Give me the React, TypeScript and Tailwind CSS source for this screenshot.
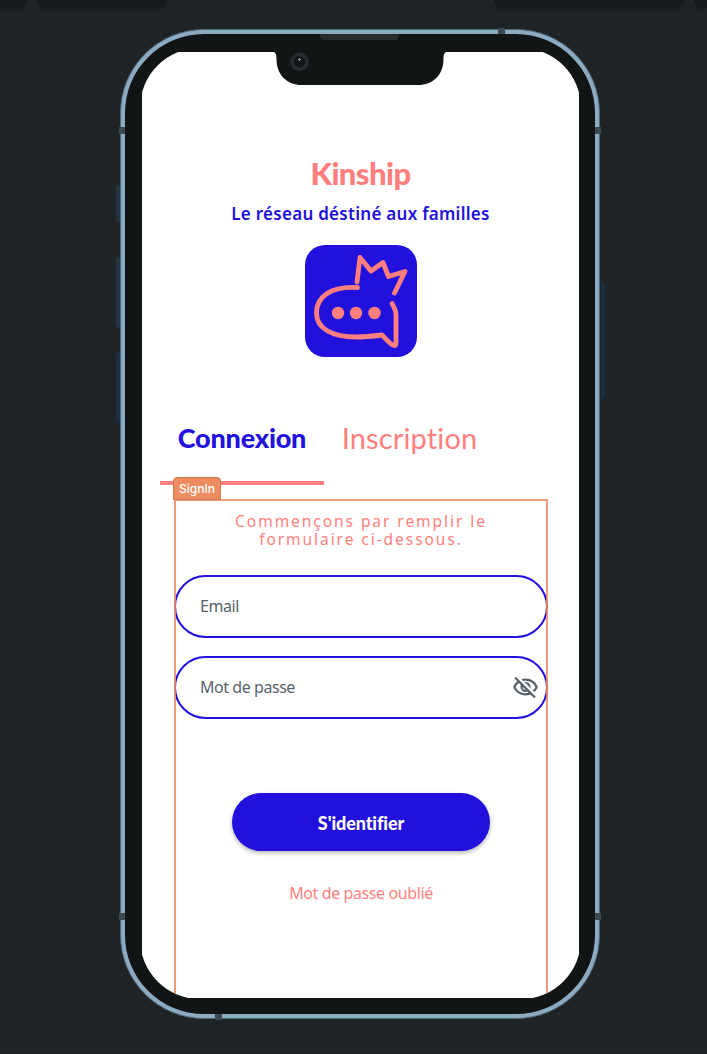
import React from "react";
import { MdOutlineVisibilityOff } from "react-icons/md";

const round = "font-['Lato',sans-serif] [font-variant-ligatures:none]";
const body = "font-['Noto_Sans',sans-serif]";

function Toolbar() {
  return (
    <div className="flex h-2 w-[707px] overflow-visible">
      <div className="h-2 w-[27px] rounded-br-lg bg-[#15191b] shadow-md" />
      <div className="ml-2.5 h-2 w-[130px] rounded-b-lg bg-[#15191b] shadow-md" />
      <div className="ml-[327px] h-2 w-[190px] rounded-b-lg bg-[#15191b] shadow-md" />
      <div className="ml-2.5 h-2 flex-1 rounded-bl-lg bg-[#15191b] shadow-md" />
    </div>
  );
}

function Logo() {
  return (
    <svg className="mt-[19px] h-28 w-28 shrink-0" viewBox="0 0 112 112" fill="none">
      <rect width="112" height="112" rx="20" fill="#2210dc" />
      <g stroke="#ff7f7e" strokeWidth="4.8" strokeLinecap="round" strokeLinejoin="round">
        <path d="M52.500 42.500C25 41 11.500 52 11.500 68C11.500 84 28 92 51 92C61 92 69 91 77 90C81 94 86 100 89 100.500C91 101 91 99 91 97V70C91 65 89 62 87 58.500" />
        <path d="M52 37L55 12.500L66 26L78 17.500L83.500 31.500L100 26.500L89.500 48" />
      </g>
      <g fill="#ff7f7e">
        <circle cx="33" cy="68" r="6.200" />
        <circle cx="51" cy="68" r="6.200" />
        <circle cx="69.500" cy="68" r="6.200" />
      </g>
    </svg>
  );
}

function Field({ label, children }: { label: string; children?: React.ReactNode }) {
  return (
    <div className="flex h-[63px] w-full items-center justify-between rounded-full border-2 border-[#2210dc] pr-[7px] pl-6">
      <span className={`${body} -mt-px text-[16px] tracking-[-0.45px] whitespace-nowrap text-[#57636c]`}>{label}</span>
      {children}
    </div>
  );
}

function SignIn() {
  return (
    <div className="relative ml-[32px] mt-[14px] flex h-[504px] w-[374px] flex-col items-center">
      <p className={`mt-[13px] ${body} text-center text-[15.5px] leading-[18px] tracking-[1.95px] whitespace-nowrap text-[#ff7f7e]`}>
        Commençons par remplir le
        <br />
        formulaire ci-dessous.
      </p>
      <div className="mt-[27px] flex w-full flex-col gap-[18px]">
        <Field label="Email" />
        <Field label="Mot de passe">
          <MdOutlineVisibilityOff className="size-[27px] text-[#57636c]" />
        </Field>
      </div>
      <button className={`mt-[74px] h-[58px] w-[258px] rounded-full bg-[#2210dc] pt-[3px] ${round} text-[18px] font-black tracking-[-0.1px] text-white shadow-[0_2px_4px_rgba(0,0,0,0.3)]`}>
        S'identifier
      </button>
      <a className={`mt-[30px] ${body} text-[16px] leading-6 tracking-[-0.4px] whitespace-nowrap text-[#ff7f7e]`}>Mot de passe oublié</a>
      <div className="pointer-events-none absolute inset-x-0 top-0 h-[520px] border-2 border-[#ee8b60]/85" />
      <div className="absolute -top-[22px] -left-px flex h-[23px] w-[48px] items-center justify-center rounded-t border border-[#cf7851] bg-[#ee8b60] font-['Inter',sans-serif] text-[12px] font-medium text-white">
        SignIn
      </div>
    </div>
  );
}

function Screen() {
  return (
    <div className="h-[951px] w-[441px] overflow-hidden rounded-[60px] bg-[#111516]">
      <div className="mt-1 ml-0.5 flex h-[946px] w-[437px] flex-col bg-white">
        <div className="flex flex-col items-center">
          <h1 className={`mt-[101px] ${round} text-[31px] leading-[40px] font-black tracking-[-0.6px] text-[#ff7f7e]`}>Kinship</h1>
          <p className={`mt-[9px] ${body} text-[17px] leading-6 font-semibold tracking-[0.28px] whitespace-nowrap text-[#2210dc]`}>
            Le réseau déstiné aux familles
          </p>
          <Logo />
        </div>
        <div className="mt-[58px] ml-[18px] flex h-[71px]">
          <div className={`w-[164px] border-b-4 border-[#ff7f7e] pt-[3px] text-center ${round} text-[27px] leading-10 font-black tracking-[-0.2px] text-[#2210dc]`}>
            Connexion
          </div>
          <div className={`w-[171px] pt-[3px] text-center ${round} text-[29px] leading-10 tracking-[0.15px] text-[#ff7f7e]`}>Inscription</div>
        </div>
        <SignIn />
      </div>
    </div>
  );
}

const hardware = [
  "left-[-4px] top-[156px] h-[37px] w-1 rounded-l bg-[#22343f]",
  "left-[-4px] top-[228px] h-[71px] w-1 rounded-l bg-[#22343f]",
  "left-[-4px] top-[323px] h-[71px] w-1 rounded-l bg-[#1c3040]",
  "left-[481px] top-[253px] h-[117px] w-1 rounded-r bg-[#1c3040]",
  "left-[-1px] top-[98px] h-[7px] w-[6px] bg-[#3a4b52]",
  "left-[475px] top-[98px] h-[7px] w-[6px] bg-[#3a4b52]",
  "left-[-1px] top-[884px] h-[7px] w-[6px] bg-[#3a4b52]",
  "left-[475px] top-[884px] h-[7px] w-[6px] bg-[#3a4b52]",
  "left-[378px] top-[-1px] h-[6px] w-[7px] bg-[#3a4b52]",
  "left-[95px] top-[985px] h-[6px] w-[7px] bg-[#3a4b52]",
  "left-[200px] top-[5px] h-[6px] w-[79px] rounded-b bg-[#272b2d]",
];

export default function App() {
  return (
    <div className="h-[1054px] w-[707px] overflow-hidden border-b border-[#1a1b1d] bg-[#1f2428]">
      <Toolbar />
      <div className="relative mt-[21px] ml-[120px] h-[990px] w-[480px] rounded-[84px] border border-[#456579] bg-[#8dabc0] p-1">
        <div className="h-full w-full rounded-[79px] bg-[#111516] pt-[14px] pl-[15px]">
          <Screen />
        </div>
        <div className="absolute -inset-px">
          {hardware.map((c) => (
            <i key={c} className={`absolute block ${c}`} />
          ))}
          <svg className="absolute top-[22px] left-[153px] h-[36px] w-[174px]" viewBox="0 0 174 36">
            <path d="M0 0H174V1C171.500 1 170.500 3 170.500 8C170.500 24 160 34 145 34H29C14 34 3.500 24 3.500 8C3.500 3 2.500 1 0 1Z" fill="#111516" />
            <circle cx="26.500" cy="10.700" r="7.500" fill="#101415" stroke="#272b2d" strokeWidth="3.500" />
            <path d="M26.500 7v3M25 8.500h3" stroke="#858b8e" strokeWidth="1" />
          </svg>
        </div>
      </div>
    </div>
  );
}
